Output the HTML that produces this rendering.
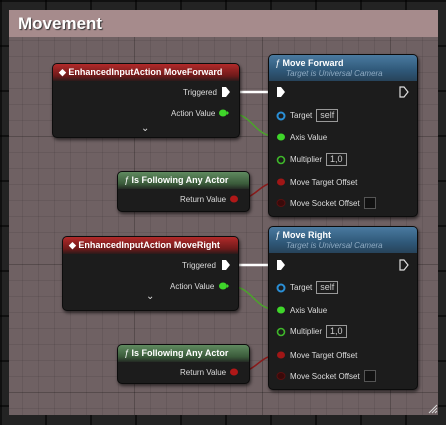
<!DOCTYPE html>
<html><head><style>
*{margin:0;padding:0;box-sizing:border-box}
body{width:446px;height:425px;overflow:hidden;background:#232323;font-family:"Liberation Sans",sans-serif;position:relative;
background-image:linear-gradient(90deg,rgba(0,0,0,.55) 2px,transparent 2px),linear-gradient(rgba(0,0,0,.55) 2px,transparent 2px);background-size:45px 45px;}
.cm{position:absolute;left:9px;top:10px;width:429px;height:405px;background:#6f6163;
background-image:linear-gradient(90deg,rgba(0,0,0,.08) 1px,transparent 1px),linear-gradient(rgba(0,0,0,.08) 1px,transparent 1px),linear-gradient(90deg,rgba(0,0,0,.16) 1px,transparent 1px),linear-gradient(rgba(0,0,0,.16) 1px,transparent 1px);
background-size:16px 16px,16px 16px,128px 128px,128px 128px;background-position:-3px 0,0 -2px,-3px 0,0 -2px}
.ch{position:absolute;left:0;top:0;width:429px;height:27px;background:#a68b8c;color:#fff;font-weight:bold;font-size:17px;padding:4px 0 0 9px;text-shadow:1px 1px 1px #333}
.n{position:absolute;background:#1c1c1c;border:1px solid #0c0c0c;border-radius:5px;box-shadow:1px 2px 3px rgba(0,0,0,.6);color:#ddd;font-size:8px}
.h{border-radius:4px 4px 0 0;color:#fff;font-weight:bold;font-size:9px;padding:3px 0 0 6px;height:17px}
.red{background:linear-gradient(#b22a2a,#6e1a1a 70%,#2a1a1a)}
.grn{background:linear-gradient(#5f8a5f,#3a5a3a 70%,#242a24)}
.blu{background:linear-gradient(#4a7aa0,#2f5878 60%,#27435a);height:26px}
.t{position:absolute;white-space:nowrap;font-size:8px;color:#ddd}
.sub{font-style:italic;font-weight:normal;font-size:8px;color:#8eaac2;margin-left:11px;margin-top:1px}
.box{display:inline-block;border:1px solid #999;padding:0 3px;font-size:9px;color:#ccc;height:13px;line-height:11px;margin-left:4px}
</style></head><body>
<div class="cm"><div class="ch">Movement</div></div>
<svg width="446" height="425" style="position:absolute;left:0;top:0">
<line x1="232" y1="92" x2="278" y2="92" stroke="#fff" stroke-width="2.5"/>
<path d="M228 113 C255 113,252 137,279 137" stroke="#4aa52a" stroke-width="1.5" fill="none"/>
<path d="M237 199 C258 199,258 182,279 182" stroke="#8a1a1a" stroke-width="1.5" fill="none"/>
<line x1="232" y1="265" x2="278" y2="265" stroke="#fff" stroke-width="2.5"/>
<path d="M228 286 C255 286,252 310,279 310" stroke="#4aa52a" stroke-width="1.5" fill="none"/>
<path d="M237 372 C258 372,258 355,279 355" stroke="#8a1a1a" stroke-width="1.5" fill="none"/>
</svg>

<div class="n" style="left:52px;top:63px;width:188px;height:75px"><div class="h red">◆ EnhancedInputAction MoveForward</div></div>
<div class="t" style="left:183px;top:88px">Triggered</div>
<svg style="position:absolute;left:221px;top:86px" width="10" height="12"><path d="M1 1h4l4 5-4 5H1z" fill="#fff"/></svg>
<div class="t" style="left:171px;top:109px">Action Value</div>
<svg style="position:absolute;left:218px;top:108px" width="12" height="10"><ellipse cx="5" cy="5" rx="4" ry="3.5" fill="#3fd62a"/><path d="M9 3l2 2-2 2z" fill="#3fd62a"/></svg>
<div class="t" style="left:141px;top:123px;font-size:10px;color:#ddd">⌄</div>

<div class="n" style="left:268px;top:54px;width:150px;height:163px"><div class="h blu"><i style="font-weight:normal">ƒ</i> Move Forward<div class="sub">Target is Universal Camera</div></div></div>
<svg style="position:absolute;left:276px;top:86px" width="10" height="12"><path d="M1 1h4l4 5-4 5H1z" fill="#fff"/></svg>
<svg style="position:absolute;left:399px;top:86px" width="10" height="12"><path d="M1 1h4l4 5-4 5H1z" fill="none" stroke="#ddd" stroke-width="1.2"/></svg>
<svg style="position:absolute;left:276px;top:110px" width="12" height="12"><circle cx="5" cy="6" r="3.5" fill="none" stroke="#2a8fd6" stroke-width="2"/></svg>
<div class="t" style="left:290px;top:109px">Target<span class="box">self</span></div>
<svg style="position:absolute;left:276px;top:131px" width="12" height="12"><ellipse cx="5" cy="6" rx="4" ry="3.5" fill="#3fd62a"/></svg>
<div class="t" style="left:290px;top:133px">Axis Value</div>
<svg style="position:absolute;left:276px;top:154px" width="12" height="12"><circle cx="5" cy="6" r="3.5" fill="none" stroke="#3fb82a" stroke-width="1.6"/></svg>
<div class="t" style="left:290px;top:153px">Multiplier<span class="box">1,0</span></div>
<svg style="position:absolute;left:276px;top:176px" width="12" height="12"><ellipse cx="5" cy="6" rx="4" ry="3.5" fill="#a01616"/></svg>
<div class="t" style="left:290px;top:178px">Move Target Offset</div>
<svg style="position:absolute;left:276px;top:197px" width="12" height="12"><ellipse cx="5" cy="6" rx="4" ry="3.5" fill="#3a0a0a" stroke="#5a1010"/></svg>
<div class="t" style="left:290px;top:199px">Move Socket Offset</div>
<div style="position:absolute;left:364px;top:197px;width:12px;height:12px;border:1px solid #555;background:#111"></div>

<div class="n" style="left:117px;top:171px;width:133px;height:41px"><div class="h grn"><i style="font-weight:normal">ƒ</i> Is Following Any Actor</div></div>
<div class="t" style="left:180px;top:195px">Return Value</div>
<svg style="position:absolute;left:228px;top:194px" width="12" height="10"><ellipse cx="6" cy="5" rx="4" ry="3.5" fill="#b01818"/></svg>

<div class="n" style="left:62px;top:236px;width:177px;height:75px"><div class="h red">◆ EnhancedInputAction MoveRight</div></div>
<div class="t" style="left:182px;top:261px">Triggered</div>
<svg style="position:absolute;left:221px;top:259px" width="10" height="12"><path d="M1 1h4l4 5-4 5H1z" fill="#fff"/></svg>
<div class="t" style="left:170px;top:282px">Action Value</div>
<svg style="position:absolute;left:218px;top:281px" width="12" height="10"><ellipse cx="5" cy="5" rx="4" ry="3.5" fill="#3fd62a"/><path d="M9 3l2 2-2 2z" fill="#3fd62a"/></svg>
<div class="t" style="left:146px;top:291px;font-size:10px">⌄</div>

<div class="n" style="left:268px;top:226px;width:150px;height:164px"><div class="h blu"><i style="font-weight:normal">ƒ</i> Move Right<div class="sub">Target is Universal Camera</div></div></div>
<svg style="position:absolute;left:276px;top:259px" width="10" height="12"><path d="M1 1h4l4 5-4 5H1z" fill="#fff"/></svg>
<svg style="position:absolute;left:399px;top:259px" width="10" height="12"><path d="M1 1h4l4 5-4 5H1z" fill="none" stroke="#ddd" stroke-width="1.2"/></svg>
<svg style="position:absolute;left:276px;top:282px" width="12" height="12"><circle cx="5" cy="6" r="3.5" fill="none" stroke="#2a8fd6" stroke-width="2"/></svg>
<div class="t" style="left:290px;top:281px">Target<span class="box">self</span></div>
<svg style="position:absolute;left:276px;top:304px" width="12" height="12"><ellipse cx="5" cy="6" rx="4" ry="3.5" fill="#3fd62a"/></svg>
<div class="t" style="left:290px;top:306px">Axis Value</div>
<svg style="position:absolute;left:276px;top:326px" width="12" height="12"><circle cx="5" cy="6" r="3.5" fill="none" stroke="#3fb82a" stroke-width="1.6"/></svg>
<div class="t" style="left:290px;top:325px">Multiplier<span class="box">1,0</span></div>
<svg style="position:absolute;left:276px;top:349px" width="12" height="12"><ellipse cx="5" cy="6" rx="4" ry="3.5" fill="#a01616"/></svg>
<div class="t" style="left:290px;top:351px">Move Target Offset</div>
<svg style="position:absolute;left:276px;top:370px" width="12" height="12"><ellipse cx="5" cy="6" rx="4" ry="3.5" fill="#3a0a0a" stroke="#5a1010"/></svg>
<div class="t" style="left:290px;top:372px">Move Socket Offset</div>
<div style="position:absolute;left:364px;top:370px;width:12px;height:12px;border:1px solid #555;background:#111"></div>

<div class="n" style="left:117px;top:344px;width:133px;height:40px"><div class="h grn"><i style="font-weight:normal">ƒ</i> Is Following Any Actor</div></div>
<div class="t" style="left:180px;top:368px">Return Value</div>
<svg style="position:absolute;left:228px;top:367px" width="12" height="10"><ellipse cx="6" cy="5" rx="4" ry="3.5" fill="#b01818"/></svg>

<svg style="position:absolute;left:428px;top:404px" width="10" height="10"><path d="M9 1L1 9M9 4L4 9M9 7L7 9" stroke="#ddd" stroke-width="1"/></svg>
</body></html>
